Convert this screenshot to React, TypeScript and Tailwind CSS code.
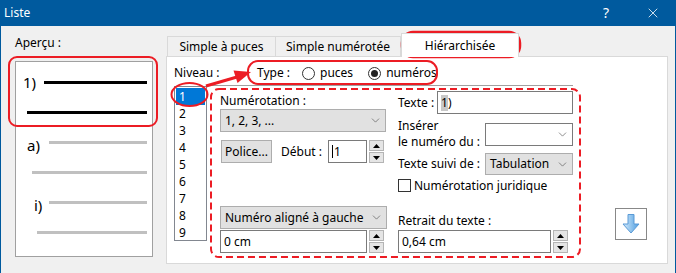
import { ChevronDown, X } from "lucide-react";

const levels = ["1", "2", "3", "4", "5", "6", "7", "8", "9"];

function Spin() {
  return (
    <div className="ml-[2px] flex flex-col gap-[1px]">
      <div className="w-[15px] h-[11px] border border-[#b4b4b4] bg-[#e5e5e5] flex items-center justify-center">
        <svg width="7" height="4" viewBox="0 0 7 4">
          <path d="M0 4 L3.5 0 L7 4Z" fill="#000" />
        </svg>
      </div>
      <div className="w-[15px] h-[11px] border border-[#b4b4b4] bg-[#e5e5e5] flex items-center justify-center">
        <svg width="7" height="4" viewBox="0 0 7 4">
          <path d="M0 0 L3.5 4 L7 0Z" fill="#000" />
        </svg>
      </div>
    </div>
  );
}

function Chevron() {
  return <ChevronDown size={13} strokeWidth={1.1} className="text-[#444] shrink-0" />;
}

function Radio({ checked }: { checked?: boolean }) {
  return (
    <span className="w-[13px] h-[13px] rounded-full border border-[#333] bg-white flex items-center justify-center">
      {checked && <span className="w-[7px] h-[7px] rounded-full bg-[#222]" />}
    </span>
  );
}

function PreviewRow({ label, pad, line, gray }: { label?: string; pad: string; line: string; gray?: boolean }) {
  return (
    <div className={`h-[30px] flex items-center justify-between ${pad}`}>
      {label ? <span className={`text-[15px] leading-none ${gray ? "pt-[6px]" : ""}`}>{label}</span> : <span />}
      <span className={`${line} h-[3px] ${gray ? "bg-[#c0c0c0]" : "bg-black"}`} />
    </div>
  );
}

function Annotations() {
  const red = "#ec1c24";
  return (
    <svg className="absolute inset-0 pointer-events-none" width="676" height="273" viewBox="0 0 676 273" fill="none">
      <rect x="9" y="57" width="148" height="69" rx="8" stroke={red} strokeWidth="2" />
      <rect x="402" y="32" width="118" height="25" rx="11" stroke={red} strokeWidth="2.5" />
      <rect x="248" y="61" width="189" height="23" rx="10" stroke={red} strokeWidth="2" />
      <ellipse cx="189.5" cy="94.5" rx="18" ry="11.5" stroke={red} strokeWidth="2" />
      <line x1="206" y1="86" x2="237" y2="77" stroke={red} strokeWidth="3" />
      <polygon points="251,72 237.5,83 233.5,70.5" fill={red} />
      <rect x="211" y="89" width="369" height="168" rx="8" stroke={red} strokeWidth="2" strokeDasharray="7 4" />
    </svg>
  );
}

export default function App() {
  return (
    <div
      className="relative w-[676px] h-[273px] overflow-hidden bg-[#f0f0f0] text-[12px] leading-[16px] text-black"
      style={{ fontFamily: '"Noto Sans", "Open Sans", sans-serif' }}
    >
      {/* Title bar */}
      <div className="h-[26px] bg-[#005a9e] text-white flex items-center">
        <span className="pl-[4px] text-[12px]">Liste</span>
        <span className="ml-auto mr-[36px] text-[14px]">?</span>
        <X size={16} strokeWidth={1.2} className="mr-[15px]" />
      </div>

      <div className="h-[247px] flex border-l border-r border-[#005a9e]">
        {/* Preview */}
        <div className="w-[165px] pl-[14px] pt-[9px]">
          <div>Aperçu :</div>
          <div className="mt-[10px] w-[138px] h-[196px] border border-[#a0a0a0] bg-white pt-[5px] pr-[5px]">
            <PreviewRow label="1)" pad="pl-[7px]" line="w-[103px]" />
            <PreviewRow pad="pl-[7px]" line="w-[120px]" />
            <PreviewRow label="a)" pad="pl-[11px]" line="w-[98px]" gray />
            <PreviewRow pad="pl-[7px]" line="w-[115px]" gray />
            <PreviewRow label="i)" pad="pl-[18px]" line="w-[98px]" gray />
            <PreviewRow pad="pl-[7px]" line="w-[110px]" gray />
          </div>
        </div>

        {/* Tabs */}
        <div className="flex flex-col">
          <div className="mt-[7px] h-[23px] flex items-end pl-[1px]">
            <div className="w-[109px] h-[20px] border border-b-0 border-[#d9d9d9] flex items-center justify-center">
              Simple à puces
            </div>
            <div className="w-[125px] h-[20px] border border-l-0 border-b-0 border-[#d9d9d9] flex items-center justify-center">
              Simple numérotée
            </div>
            <div className="relative z-10 -mb-px w-[118px] h-[24px] border border-b-0 border-[#d9d9d9] bg-white flex items-center justify-center">
              Hiérarchisée
            </div>
          </div>

          <div className="w-[502px] h-[208px] border border-[#d9d9d9] bg-white flex">
            {/* Niveau */}
            <div className="w-[44px] pl-[7px] pt-[8px]">
              <div className="whitespace-nowrap">Niveau :</div>
              <div className="mt-[5px] w-[33px] h-[155px] border border-[#828790] p-px">
                {levels.map((l, i) => (
                  <div
                    key={l}
                    className={`h-[17px] pl-[3px] flex items-center ${i === 0 ? "bg-[#0078d7] text-white" : ""}`}
                  >
                    {l}
                  </div>
                ))}
              </div>
            </div>

            <div className="flex flex-col">
              {/* Type */}
              <div className="mt-[8px] h-[16px] pl-[46px] flex items-center">
                <span>Type :</span>
                <span className="ml-[12px] flex items-center gap-[5px]">
                  <Radio /> puces
                </span>
                <span className="ml-[15px] flex items-center gap-[5px]">
                  <Radio checked /> numéros
                </span>
              </div>
              <div className="mt-[4px] ml-[1px] w-[361px] h-px bg-[#a0a0a0]" />

              {/* Numbering options */}
              <div className="mt-[4px] w-[369px] h-[168px] flex">
                <div className="pl-[9px] pt-[3px] w-[175px]">
                  <div>Numérotation :</div>
                  <div className="w-[166px] h-[23px] border border-[#adadad] bg-[#e1e1e1] flex items-center pl-[4px] pr-[3px]">
                    <span className="flex-1">1, 2, 3, ...</span>
                    <Chevron />
                  </div>
                  <div className="mt-[8px] flex items-center">
                    <div className="ml-[1px] w-[51px] h-[23px] border border-[#adadad] bg-[#e1e1e1] flex items-center justify-center">
                      Police...
                    </div>
                    <span className="ml-[9px] w-[47px]">Début :</span>
                    <div className="w-[39px] h-[23px] border border-[#7a7a7a] bg-white flex items-center pl-[3px]">
                      <span className="w-px h-[13px] bg-black mr-[1px]" />1
                    </div>
                    <Spin />
                  </div>
                  <div className="mt-[43px] w-[167px] h-[23px] border border-[#adadad] bg-[#e1e1e1] flex items-center pl-[4px] pr-[3px]">
                    <span className="flex-1">Numéro aligné à gauche</span>
                    <Chevron />
                  </div>
                  <div className="mt-[1px] flex items-center">
                    <div className="w-[147px] h-[23px] border border-[#7a7a7a] bg-white flex items-center pl-[3px]">0 cm</div>
                    <Spin />
                  </div>
                </div>

                <div className="ml-[12px] pt-[1px] w-[176px]">
                  <div className="h-[23px] flex items-center">
                    <span className="w-[39px]">Texte :</span>
                    <div className="w-[136px] h-[23px] border border-[#7a7a7a] bg-white flex items-center pl-[3px]">
                      <span className="bg-[#c8c8c8]">1</span>)
                    </div>
                  </div>
                  <div className="mt-[4px] h-[32px] flex items-center">
                    <div className="w-[87px] leading-[16px]">
                      <div>Insérer</div>
                      <div>le numéro du :</div>
                    </div>
                    <div className="w-[88px] h-[23px] border border-[#7a7a7a] bg-white flex items-center justify-end pr-[3px]">
                      <Chevron />
                    </div>
                  </div>
                  <div className="mt-[3px] h-[22px] flex items-center">
                    <span className="w-[87px]">Texte suivi de :</span>
                    <div className="w-[88px] h-[22px] border border-[#adadad] bg-[#e1e1e1] flex items-center pl-[4px] pr-[3px]">
                      <span className="flex-1">Tabulation</span>
                      <Chevron />
                    </div>
                  </div>
                  <div className="mt-[4px] h-[13px] flex items-center">
                    <span className="w-[13px] h-[13px] border border-[#333] bg-white" />
                    <span className="ml-[3px]">Numérotation juridique</span>
                  </div>
                  <div className="mt-[21px]">Retrait du texte :</div>
                  <div className="mt-[1px] flex items-center">
                    <div className="w-[153px] h-[23px] border border-[#7a7a7a] bg-white flex items-center pl-[3px]">0,64 cm</div>
                    <Spin />
                  </div>
                </div>
              </div>
            </div>

            {/* Move down */}
            <div className="ml-[35px] pt-[151px]">
              <div className="w-[32px] h-[32px] border border-[#888] bg-white flex items-center justify-center">
                <svg width="20" height="22" viewBox="0 0 20 22">
                  <defs>
                    <linearGradient id="arrowFill" x1="0" y1="0" x2="1" y2="0">
                      <stop offset="0%" stopColor="#d6ecfc" />
                      <stop offset="100%" stopColor="#4d9de0" />
                    </linearGradient>
                  </defs>
                  <path
                    d="M7 1.5 H13 V11 H18 L10 20 L2 11 H7 Z"
                    fill="url(#arrowFill)"
                    stroke="#5a9ad6"
                    strokeWidth="1"
                    strokeLinejoin="round"
                  />
                </svg>
              </div>
            </div>
          </div>
        </div>
      </div>

      <Annotations />
    </div>
  );
}
